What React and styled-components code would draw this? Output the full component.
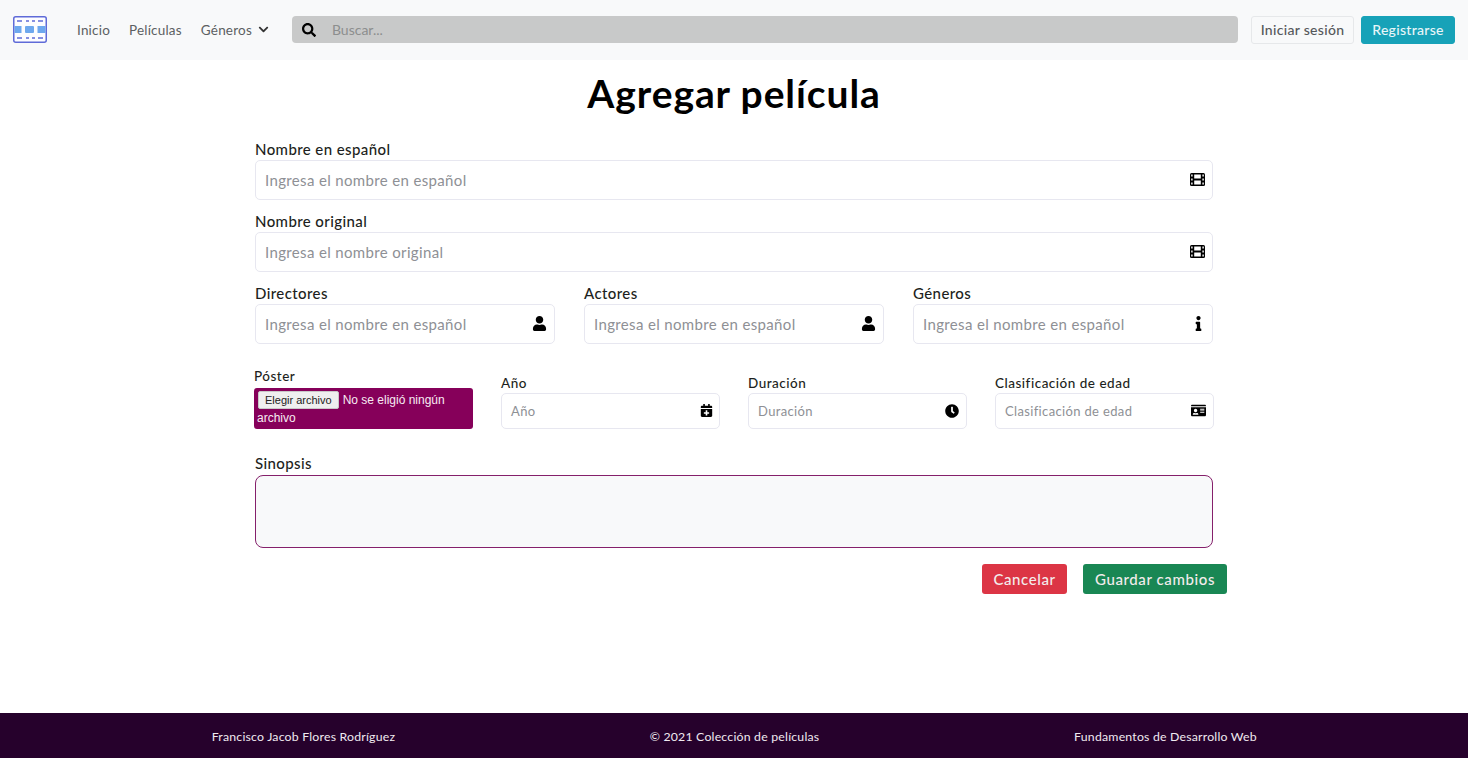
import React from 'react'
import styled, { createGlobalStyle } from 'styled-components'
import { FaUser, FaInfo, FaCalendarPlus, FaClock, FaIdCard, FaSearch, FaChevronDown } from 'react-icons/fa'

const GlobalStyle = createGlobalStyle`
  * { box-sizing: border-box; }
  html, body { margin: 0; padding: 0; background: #fff; }
  body { font-family: "Lato", "Open Sans", sans-serif; color: #212529; }
`

const Page = styled.div`
  min-height: 758px;
  display: flex;
  flex-direction: column;
`

const NavBar = styled.nav`
  height: 60px;
  background: #f8f9fa;
  display: flex;
  align-items: center;
  padding: 0 13px 1px;
`

const NavLinks = styled.div`
  display: flex;
  align-items: center;
  gap: 19px;
  margin-left: 30px;
  margin-right: 23px;
`

const NavLink = styled.a`
  font-size: 13.5px;
  color: #5c5f62;
  display: flex;
  align-items: center;
  gap: 6px;
  letter-spacing: 0.2px;
`

const SearchBar = styled.div`
  flex: 1;
  height: 27px;
  background: #c8c9c9;
  border-radius: 4px;
  display: flex;
  align-items: center;
  padding-left: 10px;
  gap: 16px;
  font-size: 14px;
  color: #8c8e8e;
  margin-right: 13px;
`

const NavButton = styled.button`
  height: 28px;
  border-radius: 3px;
  font: inherit;
  font-size: 14px;
  font-weight: 500;
  letter-spacing: 0.3px;
  padding: 0;
  width: ${p => p.$width}px;
  margin-left: ${p => p.$gap || 0}px;
  color: ${p => (p.$primary ? '#e8f6f9' : '#55585b')};
  background: ${p => (p.$primary ? '#17a2b8' : '#f8f9fa')};
  border: 1px solid ${p => (p.$primary ? '#17a2b8' : '#e6e8ea')};
`

const Main = styled.main`
  flex: 1;
  display: flex;
  flex-direction: column;
`

const Title = styled.h1`
  margin: 10px 0 0;
  height: 46px;
  line-height: 46px;
  font-size: 39px;
  font-weight: 700;
  letter-spacing: 0.9px;
  text-align: center;
  color: #000;
`

const Form = styled.form`
  width: 958px;
  margin: 25px 0 0 255px;
  display: flex;
  flex-direction: column;
`

const Field = styled.div`
  display: flex;
  flex-direction: column;
  margin-bottom: ${p => p.$mb || 0}px;
`

const Label = styled.label`
  font-size: 15px;
  line-height: 16px;
  height: 19px;
  letter-spacing: 0.4px;
  color: #1d1f21;
  font-weight: 500;
`

const InputBox = styled.div`
  height: 40px;
  border: 1px solid #e7e7f0;
  border-radius: 5px;
  background: #fff;
  display: flex;
  align-items: center;
  justify-content: space-between;
  padding: 0 7px 1px 9px;
  font-size: 15px;
  letter-spacing: 0.35px;
  color: #8e9095;
`

const SmallBox = styled(InputBox)`
  height: 36px;
  font-size: 13px;
  padding-left: 9px;
`

const ThreeCols = styled.div`
  display: grid;
  grid-template-columns: repeat(3, 300px);
  column-gap: 29px;
`

const FourCols = styled.div`
  display: grid;
  grid-template-columns: repeat(4, 219px);
  column-gap: 28px;
  width: 960px;
  margin-left: -1px;
  margin-top: 23px;
  align-items: end;
`

const SmallLabel = styled(Label)`
  font-size: 13.5px;
  height: ${p => (p.$poster ? 21 : 19)}px;
  line-height: 19px;
  letter-spacing: 0.5px;
`

const PosterBox = styled.div`
  height: 41px;
  width: 219px;
  background: #86005a;
  border-radius: 3px;
  color: #f7ebf2;
  font-family: "Liberation Sans", sans-serif;
  font-size: 12px;
  line-height: 18px;
  padding: 3px 3px 2px;
`

const PosterRow = styled.div`
  display: flex;
  align-items: center;
  gap: 4px;
  white-space: nowrap;
`

const FileButton = styled.span`
  display: inline-block;
  height: 18px;
  line-height: 16px;
  font-size: 11px;
  margin-left: 1px;
  background: #efefef;
  color: #222;
  border: 1px solid #c8c8c8;
  padding: 0 6px;
  border-radius: 2px;
`

const Synopsis = styled.textarea`
  display: block;
  height: 73px;
  width: 958px;
  background: #f8f9fa;
  border: 1px solid #85206b;
  border-radius: 8px;
  resize: none;
`

const SynopsisField = styled(Field)`
  margin-top: 26px;
`

const SynopsisLabel = styled(Label)`
  height: 20px;
`

const Actions = styled.div`
  display: flex;
  gap: 16px;
  margin-top: 16px;
  margin-left: 727px;
`

const ActionButton = styled.button`
  flex: none;
  height: 30px;
  width: ${p => p.$width}px;
  padding: 0;
  border: none;
  border-radius: 3px;
  font: inherit;
  font-size: 15px;
  font-weight: 500;
  letter-spacing: 0.6px;
  color: #f3ecec;
  background: ${p => p.$bg};
`

const Footer = styled.footer`
  height: 45px;
  background: #26012c;
  color: #f0eaf0;
  display: grid;
  grid-template-columns: repeat(3, 431px);
  padding: 1px 0 0 88px;
  align-items: center;
  text-align: center;
  font-size: 12.3px;
  letter-spacing: 0.2px;
`

const LogoSvg = () => (
  <svg width="34" height="27" viewBox="0 0 34 27">
    <rect x="0.75" y="0.75" width="32.5" height="25.5" rx="2" fill="#fdfdff" stroke="#5f6bd8" strokeWidth="1.5" />
    <rect x="1.5" y="10" width="7" height="7" fill="#6ea8ee" />
    <rect x="12" y="10" width="9" height="7" rx="1" fill="#6ea8ee" />
    <rect x="24.5" y="10" width="8" height="7" fill="#6ea8ee" />
    <path d="M4 5h5M13 5h3M19 5h3M25 5h5M4 22h5M13 22h3M19 22h3M25 22h5" stroke="#5f6bd8" strokeWidth="1.3" />
  </svg>
)

// solid film strip, heavier than the package's film glyph
const FilmIcon = () => (
  <svg width="15" height="13" viewBox="0 0 15 13">
    <rect width="15" height="13" rx="1.5" fill="#000" />
    <path d="M1.2 1.6h1.4v1.8H1.2zM1.2 5.6h1.4v1.8H1.2zM1.2 9.6h1.4v1.8H1.2zM12.4 1.6h1.4v1.8h-1.4zM12.4 5.6h1.4v1.8h-1.4zM12.4 9.6h1.4v1.8h-1.4zM4.2 1.6h6.6v3.9H4.2zM4.2 7.5h6.6v3.9H4.2z" fill="#fff" />
  </svg>
)

function TextField({ label, placeholder, icon, mb }) {
  return (
    <Field $mb={mb}>
      <Label>{label}</Label>
      <InputBox>
        <span>{placeholder}</span>
        {icon}
      </InputBox>
    </Field>
  )
}

function SmallField({ label, placeholder, icon }) {
  return (
    <Field>
      <SmallLabel>{label}</SmallLabel>
      <SmallBox>
        <span>{placeholder}</span>
        {icon}
      </SmallBox>
    </Field>
  )
}

const black = { color: '#000', fontSize: 15 }

export default function App() {
  return (
    <Page>
      <GlobalStyle />
      <NavBar>
        <LogoSvg />
        <NavLinks>
          <NavLink>Inicio</NavLink>
          <NavLink>Películas</NavLink>
          <NavLink>Géneros <FaChevronDown size={11} color="#333" /></NavLink>
        </NavLinks>
        <SearchBar>
          <FaSearch size={14} color="#000" />
          <span>Buscar...</span>
        </SearchBar>
        <NavButton $width={103}>Iniciar sesión</NavButton>
        <NavButton $primary $width={94} $gap={7}>Registrarse</NavButton>
      </NavBar>
      <Main>
        <Title>Agregar película</Title>
        <Form>
          <TextField label="Nombre en español" placeholder="Ingresa el nombre en español" icon={<FilmIcon />} mb={13} />
          <TextField label="Nombre original" placeholder="Ingresa el nombre original" icon={<FilmIcon />} mb={13} />
          <ThreeCols>
            <TextField label="Directores" placeholder="Ingresa el nombre en español" icon={<FaUser style={black} />} />
            <TextField label="Actores" placeholder="Ingresa el nombre en español" icon={<FaUser style={black} />} />
            <TextField label="Géneros" placeholder="Ingresa el nombre en español" icon={<FaInfo style={{ color: '#000', fontSize: 15, marginRight: -1 }} />} />
          </ThreeCols>
          <FourCols>
            <Field>
              <SmallLabel $poster>Póster</SmallLabel>
              <PosterBox>
                <PosterRow><FileButton>Elegir archivo</FileButton><span>No se eligió ningún</span></PosterRow>
                <div>archivo</div>
              </PosterBox>
            </Field>
            <SmallField label="Año" placeholder="Año" icon={<FaCalendarPlus style={{ color: '#000', fontSize: 13, marginRight: -1 }} />} />
            <SmallField label="Duración" placeholder="Duración" icon={<FaClock style={{ color: '#000', fontSize: 14 }} />} />
            <SmallField label="Clasificación de edad" placeholder="Clasificación de edad" icon={<FaIdCard style={{ color: '#000', fontSize: 15 }} />} />
          </FourCols>
          <SynopsisField>
            <SynopsisLabel>Sinopsis</SynopsisLabel>
            <Synopsis />
          </SynopsisField>
          <Actions>
            <ActionButton $width={85} $bg="#dc3545">Cancelar</ActionButton>
            <ActionButton $width={144} $bg="#198754">Guardar cambios</ActionButton>
          </Actions>
        </Form>
      </Main>
      <Footer>
        <span>Francisco Jacob Flores Rodríguez</span>
        <span>© 2021 Colección de películas</span>
        <span>Fundamentos de Desarrollo Web</span>
      </Footer>
    </Page>
  )
}
